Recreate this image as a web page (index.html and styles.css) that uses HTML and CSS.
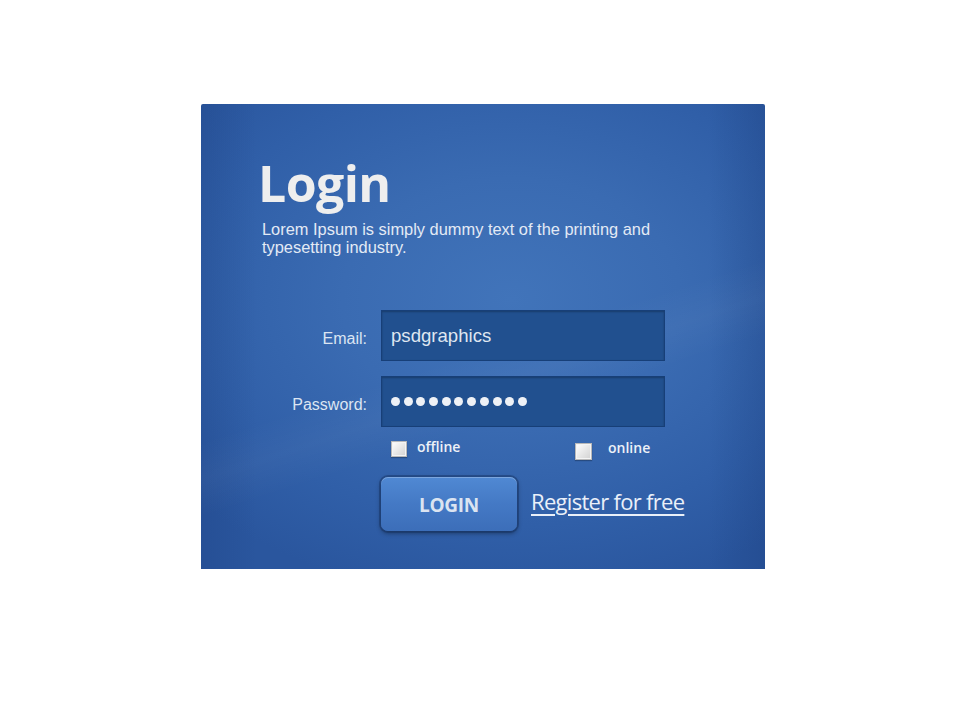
FILE: index.html
```html
<!DOCTYPE html>
<html lang="en">
<head>
<meta charset="utf-8">
<title>Login</title>
<link rel="stylesheet" href="styles.css">
</head>
<body>
<div class="panel">
  <h1 class="title">Login</h1>
  <p class="intro">Lorem Ipsum is simply dummy text of the printing and<br>typesetting industry.</p>
  <div class="form">
    <label class="label">Email:</label>
    <div class="field"><span class="value">psdgraphics</span></div>
    <label class="label">Password:</label>
    <div class="field" aria-label="password">
      <span class="dots"><i></i><i></i><i></i><i></i><i></i><i></i><i></i><i></i><i></i><i></i><i></i></span>
    </div>
    <div class="spacer"></div>
    <div class="checks">
      <span class="check check-off"><span class="box"></span><span class="check-text">offline</span></span>
      <span class="check check-on"><span class="box box-big"></span><span class="check-text">online</span></span>
    </div>
    <div class="spacer"></div>
    <div class="actions">
      <button class="btn" type="button">LOGIN</button>
      <a class="register" href="#">Register for free</a>
    </div>
  </div>
</div>
</body>
</html>
```
FILE: styles.css
```css
html, body {
  margin: 0;
  padding: 0;
  background: #ffffff;
}

.panel {
  box-sizing: border-box;
  width: 564px;
  height: 465px;
  margin: 104px 0 0 201px;
  padding: 54px 0 0 57px;
  border-radius: 2px 2px 0 0;
  background:
    linear-gradient(162deg, rgba(255,255,255,0) 0%, rgba(255,255,255,0) 52%, rgba(255,255,255,0.03) 58%, rgba(255,255,255,0) 64%, rgba(255,255,255,0) 100%),
    linear-gradient(to right, rgba(20,50,110,0.18) 0%, rgba(20,50,110,0) 10%, rgba(20,50,110,0) 90%, rgba(20,50,110,0.22) 100%),
    radial-gradient(ellipse 75% 65% at 55% 42%, #4174ba 0%, #3a6bb2 40%, #305fa8 75%, #2a569e 100%);
  font-family: "Liberation Sans", Arial, sans-serif;
}

.title {
  margin: 0;
  font-family: "Open Sans", sans-serif;
  font-weight: 700;
  font-size: 50px;
  line-height: 50px;
  letter-spacing: -0.6px;
  color: #eeeeee;
}

.intro {
  margin: 12px 0 0 4px;
  font-size: 16.4px;
  line-height: 18px;
  color: #e3eaf5;
}

.form {
  display: grid;
  grid-template-columns: 109px 284px;
  column-gap: 14px;
  margin-top: 54px;
}

.label {
  align-self: start;
  justify-self: end;
  font-size: 16px;
  color: #dce5f2;
  padding-top: 20px;
}

.field {
  box-sizing: border-box;
  height: 51px;
  margin-bottom: 15px;
  border: 1px solid #173f78;
  background: #21508f;
  box-shadow: inset 0 1px 2px rgba(0,0,0,0.25);
  display: flex;
  align-items: center;
  padding-left: 9px;
}

.value {
  font-size: 18.6px;
  color: #dfe6f1;
  margin-top: 0;
}

.dots {
  display: flex;
  gap: 3.7px;
  margin-top: 0;
}

.dots i {
  width: 9px;
  height: 9px;
  border-radius: 50%;
  background: #eef1f6;
}

.checks {
  display: flex;
  align-items: flex-start;
  padding-left: 10px;
  height: 20px;
  margin-top: -1px;
}

.check {
  display: flex;
  align-items: center;
}

.check-off {
  width: 184px;
}

.check-on {
  margin-top: 2px;
}

.box {
  box-sizing: border-box;
  width: 16px;
  height: 16px;
  border: 1px solid #b9b9b9;
  background: linear-gradient(135deg, #ffffff 0%, #e6e6e6 55%, #d2d2d2 100%);
  box-shadow: inset 0 0 0 1px #f4f4f4, 0 1px 1px rgba(0,0,0,0.25);
}

.box-big {
  width: 17px;
  height: 17px;
}

.check-text {
  font-family: "Open Sans", sans-serif;
  font-weight: 600;
  font-size: 14px;
  color: #edf1f7;
  margin-left: 10px;
  margin-top: -5px;
}

.check-on .check-text {
  margin-left: 16px;
  margin-top: -8px;
}

.actions {
  display: flex;
  align-items: center;
  margin-top: 16px;
  white-space: nowrap;
}

.btn {
  flex: 0 0 auto;
  box-sizing: border-box;
  width: 136px;
  height: 54px;
  border: 0;
  border-radius: 7px;
  background: linear-gradient(to bottom, #5089d3 0%, #4479c5 50%, #3c6eb9 100%);
  box-shadow: 0 0 0 2px rgba(22,50,100,0.45), 0 2px 5px rgba(0,0,0,0.45), inset 0 1px 0 rgba(255,255,255,0.25);
  font-family: "Open Sans", sans-serif;
  font-weight: 700;
  font-size: 19px;
  letter-spacing: -0.3px;
  color: #dbe4f1;
  padding: 2px 0 0;
  cursor: pointer;
}

.register {
  flex: 0 0 auto;
  margin-left: 14px;
  margin-top: -7px;
  font-family: "Open Sans", sans-serif;
  font-weight: 500;
  font-size: 22px;
  letter-spacing: -0.7px;
  color: #eaf0f9;
  text-decoration: underline;
  text-decoration-thickness: 2px;
  text-underline-offset: 4px;
}
```
